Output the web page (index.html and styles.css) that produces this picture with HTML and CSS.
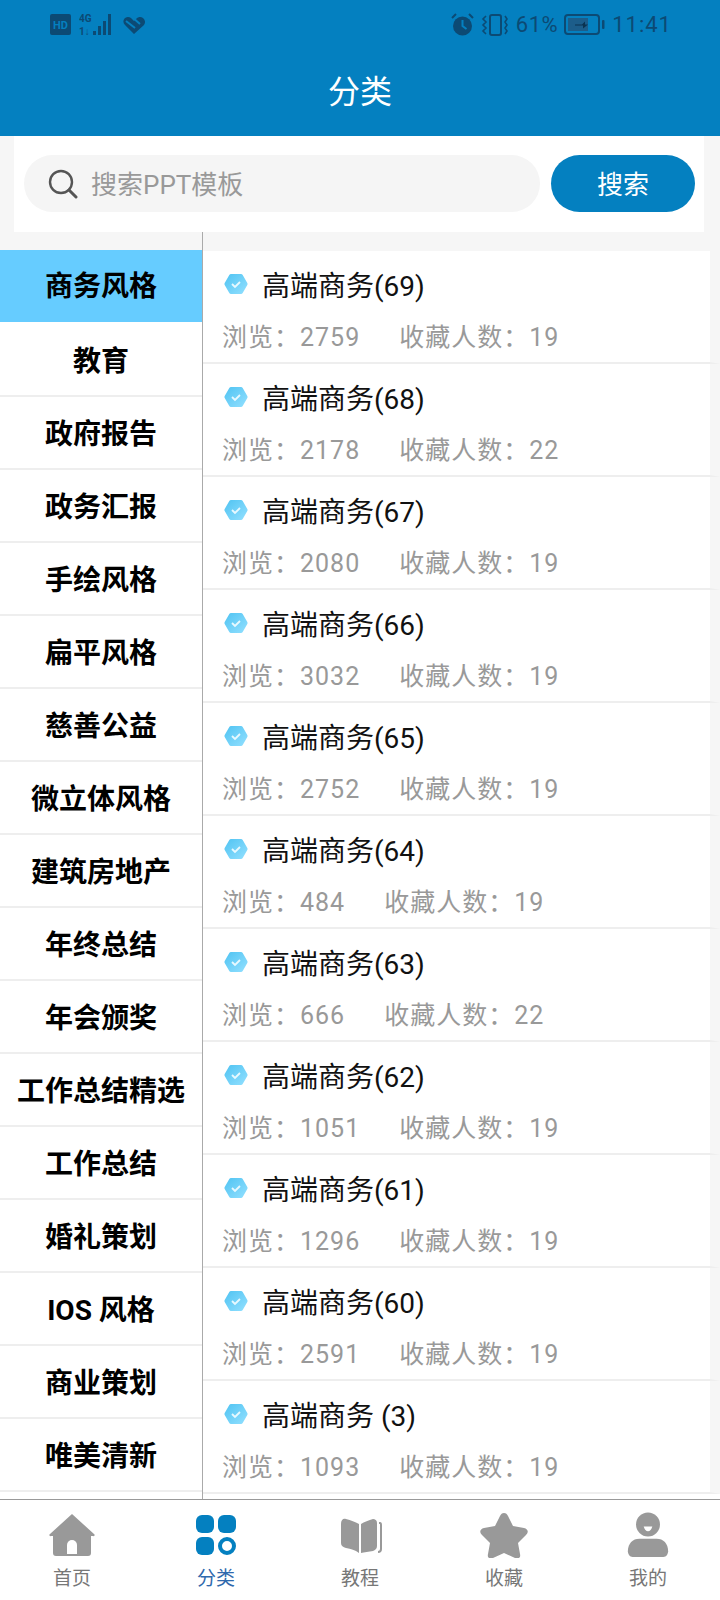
FILE: index.html
```html
<!DOCTYPE html>
<html lang="zh-CN">
<head>
  <meta charset="UTF-8">
  <meta name="viewport" content="width=device-width, initial-scale=1.0">
  <title>分类</title>
  <link rel="stylesheet" href="styles.css">
</head>
<body>
  <header class="top">
    <div class="status">
      <div class="status-left">
        <svg class="ico-hd" width="21" height="21" viewBox="0 0 21 21"><rect width="21" height="21" rx="2" fill="#0c4a74"/><text x="10.5" y="15" class="hd-text">HD</text></svg>
        <svg class="ico-signal" width="36" height="24" viewBox="0 0 36 24">
          <text x="0" y="9" class="net-text">4G</text>
          <text x="0" y="22" class="net-text">1↓</text>
          <rect x="14" y="18" width="3" height="4" fill="#0c4a74"/>
          <rect x="19" y="13" width="3" height="9" fill="#0c4a74"/>
          <rect x="24" y="8" width="3" height="14" fill="#0c4a74"/>
          <rect x="29" y="1" width="3" height="21" fill="#0c4a74"/>
        </svg>
        <svg class="ico-heart" width="23" height="20" viewBox="0 0 23 20">
          <path d="M11 19 2 10a4.500 4.500 0 0 1 6-7l3 3 2-2a5 5 0 0 1 8 6z" fill="#0c4a74"/>
          <path d="M3 6l9 7M9 2l8 7" stroke="#0480c0" stroke-width="2" fill="none"/>
        </svg>
      </div>
      <div class="status-right">
        <svg width="23" height="23" viewBox="0 0 23 23">
          <circle cx="11.500" cy="13" r="9.500" fill="#0c4a74"/>
          <path d="M11.500 7v6l4 3" stroke="#0480c0" stroke-width="2" fill="none"/>
          <path d="M1 5l4-4M22 5l-4-4" stroke="#0c4a74" stroke-width="2"/>
        </svg>
        <svg class="ico-vib" width="28" height="22" viewBox="0 0 28 22">
          <rect x="9" y="1" width="11" height="20" rx="2" fill="none" stroke="#0c4a74" stroke-width="2"/>
          <path d="M5 2 2 5l3 3-3 3 3 3-3 3 3 3M24 2l2 3-2 3 2 3-2 3 2 3-2 3" fill="none" stroke="#0c4a74" stroke-width="1.600"/>
        </svg>
        <span class="status-text pct">61%</span>
        <svg class="ico-batt" width="41" height="21" viewBox="0 0 41 21">
          <rect x="1" y="1" width="34" height="19" rx="3" fill="none" stroke="#0c4a74" stroke-width="2"/>
          <rect x="4" y="4" width="20" height="13" fill="#1c5d8a"/>
          <path d="M11 10.500h7l3-3v3h3l-5 4v-3h-8z" fill="#0a3350"/>
          <rect x="38" y="6" width="2.500" height="9" rx="1" fill="#0c4a74"/>
        </svg>
        <span class="status-text">11:41</span>
      </div>
    </div>
    <h1 class="title">分类</h1>
  </header>

  <section class="search">
    <div class="search-box">
      <svg width="30" height="30" viewBox="0 0 30 30">
        <circle cx="13" cy="13" r="11" fill="none" stroke="#555" stroke-width="2.400"/>
        <path d="M21 21l7 7" stroke="#555" stroke-width="3" stroke-linecap="round"/>
      </svg>
      <span class="search-hint">搜索PPT模板</span>
    </div>
    <button class="search-btn">搜索</button>
  </section>

  <main class="content">
    <nav class="side">
      <a class="side-item active">商务风格</a>
      <a class="side-item">教育</a>
      <a class="side-item">政府报告</a>
      <a class="side-item">政务汇报</a>
      <a class="side-item">手绘风格</a>
      <a class="side-item">扁平风格</a>
      <a class="side-item">慈善公益</a>
      <a class="side-item">微立体风格</a>
      <a class="side-item">建筑房地产</a>
      <a class="side-item">年终总结</a>
      <a class="side-item">年会颁奖</a>
      <a class="side-item">工作总结精选</a>
      <a class="side-item">工作总结</a>
      <a class="side-item">婚礼策划</a>
      <a class="side-item">IOS 风格</a>
      <a class="side-item">商业策划</a>
      <a class="side-item">唯美清新</a>
    </nav>

    <svg class="defs" width="0" height="0">
      <defs>
        <linearGradient id="hexfill" x1="0" y1="0" x2="1" y2="1">
          <stop offset="0" stop-color="#4fc3f2"/>
          <stop offset="1" stop-color="#93e0ff"/>
        </linearGradient>
        <symbol id="badge" viewBox="0 0 24 22">
          <path d="M7 1h10a2 2 0 0 1 1.700 1l4.600 8a2 2 0 0 1 0 2l-4.600 8a2 2 0 0 1-1.700 1H7a2 2 0 0 1-1.700-1L.7 12a2 2 0 0 1 0-2l4.600-8A2 2 0 0 1 7 1z" fill="url(#hexfill)"/>
          <path d="M8 11l3 3 5-5" fill="none" stroke="#e8f9ff" stroke-width="1.800"/>
        </symbol>
      </defs>
    </svg>

    <div class="list">
      <article class="card">
        <div class="card-title"><svg class="badge" width="24" height="22"><use href="#badge"/></svg>高端商务(69)</div>
        <div class="card-meta"><span>浏览：2759</span><span>收藏人数：19</span></div>
      </article>
      <article class="card">
        <div class="card-title"><svg class="badge" width="24" height="22"><use href="#badge"/></svg>高端商务(68)</div>
        <div class="card-meta"><span>浏览：2178</span><span>收藏人数：22</span></div>
      </article>
      <article class="card">
        <div class="card-title"><svg class="badge" width="24" height="22"><use href="#badge"/></svg>高端商务(67)</div>
        <div class="card-meta"><span>浏览：2080</span><span>收藏人数：19</span></div>
      </article>
      <article class="card">
        <div class="card-title"><svg class="badge" width="24" height="22"><use href="#badge"/></svg>高端商务(66)</div>
        <div class="card-meta"><span>浏览：3032</span><span>收藏人数：19</span></div>
      </article>
      <article class="card">
        <div class="card-title"><svg class="badge" width="24" height="22"><use href="#badge"/></svg>高端商务(65)</div>
        <div class="card-meta"><span>浏览：2752</span><span>收藏人数：19</span></div>
      </article>
      <article class="card">
        <div class="card-title"><svg class="badge" width="24" height="22"><use href="#badge"/></svg>高端商务(64)</div>
        <div class="card-meta"><span>浏览：484</span><span>收藏人数：19</span></div>
      </article>
      <article class="card">
        <div class="card-title"><svg class="badge" width="24" height="22"><use href="#badge"/></svg>高端商务(63)</div>
        <div class="card-meta"><span>浏览：666</span><span>收藏人数：22</span></div>
      </article>
      <article class="card">
        <div class="card-title"><svg class="badge" width="24" height="22"><use href="#badge"/></svg>高端商务(62)</div>
        <div class="card-meta"><span>浏览：1051</span><span>收藏人数：19</span></div>
      </article>
      <article class="card">
        <div class="card-title"><svg class="badge" width="24" height="22"><use href="#badge"/></svg>高端商务(61)</div>
        <div class="card-meta"><span>浏览：1296</span><span>收藏人数：19</span></div>
      </article>
      <article class="card">
        <div class="card-title"><svg class="badge" width="24" height="22"><use href="#badge"/></svg>高端商务(60)</div>
        <div class="card-meta"><span>浏览：2591</span><span>收藏人数：19</span></div>
      </article>
      <article class="card">
        <div class="card-title"><svg class="badge" width="24" height="22"><use href="#badge"/></svg>高端商务 (3)</div>
        <div class="card-meta"><span>浏览：1093</span><span>收藏人数：19</span></div>
      </article>
    </div>
  </main>

  <footer class="tabs">
    <a class="tab">
      <svg width="48" height="44" viewBox="0 0 48 44">
        <path d="M24 1 46 21a1 1 0 0 1-1 2h-2v17a3 3 0 0 1-3 3H8a3 3 0 0 1-3-3V23H3a1 1 0 0 1-1-2z" fill="#999"/>
        <path d="M19 41V32a5 5 0 0 1 10 0v9z" fill="#fff"/>
      </svg>
      <span>首页</span>
    </a>
    <a class="tab on">
      <svg width="48" height="44" viewBox="0 0 48 44">
        <rect x="4" y="2" width="18" height="18" rx="6" fill="#0480c0"/>
        <rect x="26" y="2" width="18" height="18" rx="6" fill="#0480c0"/>
        <rect x="4" y="24" width="18" height="18" rx="6" fill="#0480c0"/>
        <circle cx="35" cy="33" r="7" fill="none" stroke="#0480c0" stroke-width="4"/>
      </svg>
      <span>分类</span>
    </a>
    <a class="tab">
      <svg width="48" height="44" viewBox="0 0 48 44">
        <path d="M5 11c0-4 2-6 5-5 5 1 9 3 13 5v29c-4-3-8-4-13-5-3-1-5-2-5-5z" fill="#999"/>
        <path d="M25 11c3-2 8-4 12-5 2 0 4 1 4 4v23c0 3-2 4-4 5-4 1-9 1-12 2z" fill="#999"/>
        <path d="M43 10h1c1 0 1 1 1 2v24c0 2-1 3-3 3" fill="none" stroke="#999" stroke-width="2"/>
      </svg>
      <span>教程</span>
    </a>
    <a class="tab">
      <svg width="50" height="46" viewBox="0 0 50 46">
        <path d="M25 1c2 0 3 1 4 3l5 10 11 2c4 1 5 4 2 7l-8 8 2 11c1 4-2 5-5 4l-11-5-11 5c-3 1-6 0-5-4l2-11-8-8c-3-3-2-6 2-7l11-2 5-10c1-2 2-3 4-3z" fill="#999"/>
      </svg>
      <span>收藏</span>
    </a>
    <a class="tab">
      <svg width="48" height="48" viewBox="0 0 48 48">
        <circle cx="24" cy="13" r="12.500" fill="#999"/>
        <path d="M19.500 15h9c-.8 3-2.500 5-4.500 5s-3.700-2-4.500-5z" fill="#fff"/>
        <path d="M15 28h18c7 0 12 5 12 13 0 3-2 6-5 6H8c-3 0-5-3-5-6 0-8 5-13 12-13z" fill="#999"/>
      </svg>
      <span>我的</span>
    </a>
  </footer>
</body>
</html>
```

FILE: styles.css
```css
* {
  box-sizing: border-box;
}

html, body {
  margin: 0;
  padding: 0;
}

body {
  width: 720px;
  height: 1600px;
  display: flex;
  flex-direction: column;
  overflow: hidden;
  background-color: #f6f6f6;
  font-family: Roboto, "Noto Sans CJK SC", sans-serif;
  color: #111;
}

/* blue header with the phone status row */
.top {
  height: 136px;
  background-color: #0480c0;
}

.status {
  height: 48px;
  padding: 12px 48px 0 50px;
  display: flex;
  justify-content: space-between;
  align-items: flex-start;
}

.status-left, .status-right {
  display: flex;
  align-items: center;
  height: 25px;
}

.ico-signal {
  margin-left: 8px;
}

.ico-heart {
  margin-left: 8px;
}

.ico-vib {
  margin-left: 7px;
}

.ico-batt {
  margin-left: 6px;
}

.hd-text {
  font: bold 11px Roboto, sans-serif;
  fill: #0480c0;
  text-anchor: middle;
}

.net-text {
  font: bold 10px Roboto, sans-serif;
  fill: #0c4a74;
}

.status-text {
  margin-left: 7px;
  font-size: 22px;
  letter-spacing: 1px;
  color: #0c4a74;
}

.pct {
  font-size: 22px;
  letter-spacing: 0.5px;
}

.title {
  margin: 0;
  height: 88px;
  line-height: 88px;
  text-align: center;
  font-size: 32px;
  font-weight: 400;
  color: #fff;
}

/* search row */
.search {
  height: 96px;
  margin: 0 16px 0 14px;
  padding: 19px 9px 0 10px;
  display: flex;
  gap: 11px;
  background-color: #fff;
}

.search-box {
  flex: 1;
  height: 57px;
  padding-left: 24px;
  display: flex;
  align-items: center;
  gap: 13px;
  border-radius: 29px;
  background-color: #f5f5f5;
}

.search-hint {
  padding-bottom: 2px;
  font-size: 26px;
  color: #999;
}

.search-btn {
  width: 144px;
  height: 57px;
  padding: 0 0 2px;
  border: none;
  border-radius: 29px;
  background-color: #0480c0;
  color: #fff;
  font-family: inherit;
  font-size: 26px;
}

/* category column and template list */
.content {
  flex: 1;
  min-height: 0;
  display: flex;
  overflow: hidden;
  background-color: #fff;
  border-bottom: 1px solid #999;
  position: relative;
}

.side {
  width: 203px;
  flex-shrink: 0;
  border-right: 1px solid #aaa;
}

.side::before {
  content: "";
  display: block;
  height: 18px;
  background-color: #f6f6f6;
}

.side-item {
  display: flex;
  align-items: center;
  justify-content: center;
  height: 73px;
  padding-bottom: 2px;
  border-bottom: 2px solid #eee;
  font-size: 28px;
  font-weight: 700;
  color: #000;
}

.side-item.active {
  background-color: #66ccff;
  border-bottom: none;
  height: 72px;
  padding-bottom: 4px;
  margin-bottom: 2px;
}

.defs {
  position: absolute;
}

.list {
  flex: 1;
  border-top: 19px solid #f6f6f6;
}

.card {
  height: 113px;
  padding: 10px 0 0 19px;
  border-right: 10px solid #f6f6f6;
  border-bottom: 2px solid #eee;
}

.card-title {
  display: flex;
  align-items: center;
  height: 46px;
  font-size: 28px;
  color: #111;
}

.badge {
  margin: 0 14px 0 2px;
}

.card-meta {
  display: flex;
  gap: 39px;
  margin-top: 10px;
  font-size: 25px;
  letter-spacing: 1px;
  color: #999;
}

/* bottom tab bar */
.tabs {
  height: 100px;
  display: flex;
  background-color: #fff;
}

.tab {
  flex: 1;
  height: 100px;
  padding-top: 12px;
  display: flex;
  flex-direction: column;
  align-items: center;
  font-size: 19px;
  color: #777;
}

.tab svg {
  height: 46px;
}

.tab span {
  margin-top: 5px;
}

.tab.on {
  color: #2f69ad;
}
```
